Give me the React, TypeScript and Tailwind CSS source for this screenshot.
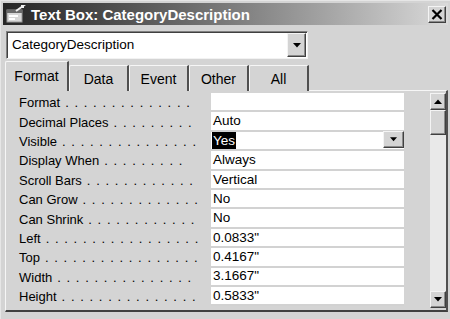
import React from 'react';

const font = "font-['Liberation_Sans',Arial,sans-serif]";

const props = [
  { name: 'Format', value: '', dots: 14 },
  { name: 'Decimal Places', value: 'Auto', dots: 9 },
  { name: 'Visible', value: 'Yes', dots: 15, selected: true },
  { name: 'Display When', value: 'Always', dots: 9 },
  { name: 'Scroll Bars', value: 'Vertical', dots: 12 },
  { name: 'Can Grow', value: 'No', dots: 13 },
  { name: 'Can Shrink', value: 'No', dots: 12 },
  { name: 'Left', value: '0.0833"', dots: 17 },
  { name: 'Top', value: '0.4167"', dots: 17 },
  { name: 'Width', value: '3.1667"', dots: 15 },
  { name: 'Height', value: '0.5833"', dots: 15 },
];

const tabs = ['Format', 'Data', 'Event', 'Other', 'All'];

const DownArrow = ({ size = 7 }: { size?: number }) => (
  <svg width={size} height={Math.ceil(size / 2) + 1} viewBox="0 0 8 5">
    <path d="M0 0 H8 L4 4.5 Z" fill="#000" />
  </svg>
);

const UpArrow = () => (
  <svg width="8" height="5" viewBox="0 0 8 5">
    <path d="M0 5 H8 L4 0.5 Z" fill="#000" />
  </svg>
);

const Raised: React.FC<{ className?: string; children?: React.ReactNode }> = ({ className = '', children }) => (
  <div
    className={`flex items-center justify-center bg-[#d4d4d4] border border-t-[#f4f4f4] border-l-[#f4f4f4] border-r-[#404040] border-b-[#404040] shadow-[inset_-1px_-1px_0_#8a8a8a] ${className}`}
  >
    {children}
  </div>
);

const FormIcon = () => (
  <svg width="20" height="18" viewBox="0 0 20 18">
    <rect x="1" y="5" width="15" height="12" fill="#d8d8d8" stroke="#9a9a9a" />
    <rect x="1" y="5" width="15" height="3" fill="#6a6a6a" />
    <rect x="3" y="10" width="9" height="2" fill="#ffffff" />
    <rect x="3" y="13" width="6" height="2" fill="#ffffff" />
    <path d="M10 6 L17 1 L15 1 M17 1 L17 3" stroke="#f0f0f0" strokeWidth="2" fill="none" />
  </svg>
);

export default function App() {
  return (
    <div className={`w-[450px] h-[319px] overflow-hidden bg-[#d4d4d4] ${font} text-black border-l border-t border-[#e6e6e6]`}>
      {/* title bar */}
      <div className="mx-[2px] mt-[2px] h-[22px] flex items-center bg-linear-to-r from-[#262626] to-[#dadada]">
        <div className="ml-[3px] w-[22px]">
          <FormIcon />
        </div>
        <span className="ml-[3px] text-[15px] font-bold text-white leading-none">
          Text Box: CategoryDescription
        </span>
        <Raised className="ml-auto mr-[2px] w-[18px] h-[17px]">
          <svg width="12" height="11" viewBox="0 0 12 11">
            <path d="M1.5 1 L10.5 10 M10.5 1 L1.5 10" stroke="#000" strokeWidth="2.2" />
          </svg>
        </Raised>
      </div>

      {/* object combo */}
      <div className="ml-[5px] mt-[6px] w-[302px] h-[28px] flex bg-white border border-t-[#808080] border-l-[#808080] border-b-[#f2f2f2] border-r-[#f2f2f2] shadow-[inset_1px_1px_0_#404040]">
        <span className="flex-1 pl-[5px] self-center text-[13.5px] leading-none">CategoryDescription</span>
        <Raised className="w-[19px] mt-[1px] mb-[1px] mr-[1px]">
          <DownArrow size={8} />
        </Raised>
      </div>

      {/* tabs */}
      <div className="ml-[4px] mt-[2px] h-[30px] flex items-end">
        {tabs.map((t, i) => (
          <div
            key={t}
            className={`flex items-center justify-center text-[14px] leading-none bg-[#d4d4d4] border-t border-l border-t-[#f6f6f6] border-l-[#f6f6f6] border-r-2 border-r-[#505050] rounded-tl-[2px] ${
              i === 0 ? 'w-[64px] h-[30px] pb-[2px] relative z-10' : 'w-[60px] h-[26px] pt-[1px]'
            }`}
          >
            {t}
          </div>
        ))}
      </div>

      {/* property sheet */}
      <div className="ml-[4px] mr-[2px] h-[222px] flex border-t border-l border-[#f6f6f6] border-r-2 border-r-[#505050] border-b-2 border-b-[#404040] -mt-px">
        <div className="w-[399px] flex flex-col pt-[2px]">
          {props.map((p) => (
            <div key={p.name} className="h-[19.4px] flex">
              <div className="w-[205px] pl-[13px] flex items-center overflow-hidden whitespace-nowrap text-[13px] leading-none">
                <span>{p.name}</span>
                <span className="ml-[5px] tracking-[5.7px]">{'.'.repeat(p.dots)}</span>
              </div>
              <div className="w-[193px] bg-white border-b-2 border-[#d2d2d2] flex items-center text-[13.5px] leading-none">
                {p.selected ? (
                  <>
                    <span className="ml-[1px] bg-black text-white px-[1px] py-[2px]">{p.value}</span>
                    <Raised className="ml-auto w-[21px] h-[17px] mb-[1px]">
                      <DownArrow size={7} />
                    </Raised>
                  </>
                ) : (
                  <span className="ml-[2px]">{p.value}</span>
                )}
              </div>
            </div>
          ))}
        </div>
        {/* scrollbar */}
        <div className="ml-[26px] mt-[2px] mb-[2px] w-[18px] flex flex-col bg-[#e9e9e9]">
          <Raised className="h-[17px]">
            <UpArrow />
          </Raised>
          <Raised className="h-[25px]" />
          <div className="flex-1" />
          <Raised className="h-[17px]">
            <DownArrow size={8} />
          </Raised>
        </div>
      </div>
    </div>
  );
}
